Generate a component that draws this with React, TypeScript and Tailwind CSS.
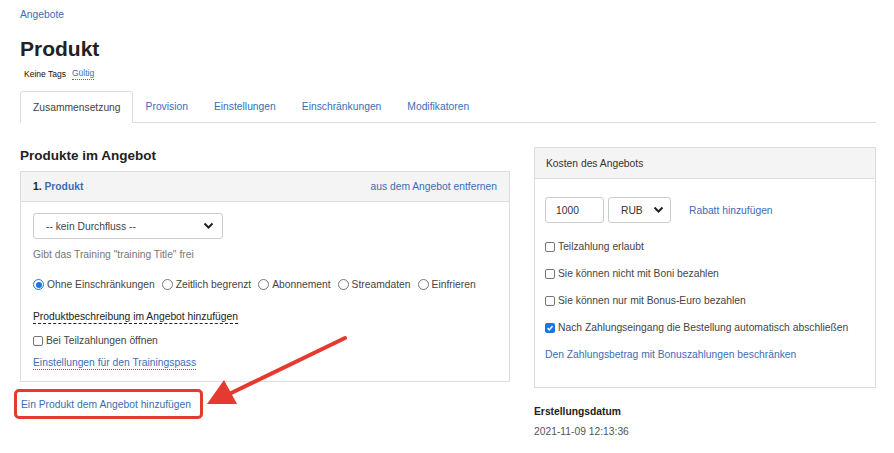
import React from "react";

const link = "text-[#3d6db5]";

function Radio({ checked, label }: { checked?: boolean; label: string }) {
  return (
    <label className="flex items-center gap-[3px] whitespace-nowrap">
      <span
        className={
          "flex h-[11px] w-[11px] shrink-0 items-center justify-center rounded-full border " +
          (checked ? "border-[#1a73e8]" : "border-[#767676]")
        }
      >
        {checked && <span className="h-[6px] w-[6px] rounded-full bg-[#1a73e8]" />}
      </span>
      <span>{label}</span>
    </label>
  );
}

function Check({ checked, label }: { checked?: boolean; label: string }) {
  return (
    <label className="flex items-center gap-[3px] whitespace-nowrap">
      {checked ? (
        <span className="flex h-[10px] w-[10px] shrink-0 items-center justify-center rounded-[2px] bg-[#1a73e8]">
          <svg width="8" height="8" viewBox="0 0 10 10">
            <path d="M2 5.2 L4.2 7.4 L8.2 2.6" stroke="white" strokeWidth="1.9" fill="none" />
          </svg>
        </span>
      ) : (
        <span className="h-[10px] w-[10px] shrink-0 rounded-[2px] border border-[#767676] bg-white" />
      )}
      <span>{label}</span>
    </label>
  );
}

function Chevron() {
  return (
    <svg width="11" height="8" viewBox="0 0 11 8">
      <path d="M1.5 1.5 L5.5 5.5 L9.5 1.5" stroke="#222" strokeWidth="2" fill="none" />
    </svg>
  );
}

export default function App() {
  return (
    <div
      className="relative h-[453px] w-[894px] overflow-hidden whitespace-nowrap bg-white text-[10.3px] leading-[13px] text-[#333]"
      style={{ fontFamily: '"Liberation Sans", Arial, sans-serif' }}
    >
      <div className="pl-[20px] pr-[18px]">
        <div className={"h-[24px] pt-[8px] " + link}>Angebote</div>
        <h1 className="mt-[12px] text-[21px] font-bold leading-[26px] text-[#222]">Produkt</h1>
        <div className="mt-[5px] flex items-center gap-[6px] pl-[4px] text-[8.5px] leading-[12px]">
          <span className="text-[#111]">Keine Tags</span>
          <span className={"border-b border-dotted border-[#3d6db5] " + link}>Gültig</span>
        </div>

        {/* Tabs */}
        <div className="mt-[11px] flex h-[32px] border-b border-[#dddddd]">
          <div className="-mb-px flex items-center rounded-t-[3px] border border-[#dddddd] border-b-white bg-white pl-[12px] pr-[11px] text-[#444]">
            Zusammensetzung
          </div>
          <div className={"flex items-center pl-[13px] pr-[13px] " + link}>Provision</div>
          <div className={"flex items-center px-[13px] " + link}>Einstellungen</div>
          <div className={"flex items-center px-[13px] " + link}>Einschränkungen</div>
          <div className={"flex items-center px-[13px] " + link}>Modifikatoren</div>
        </div>

        <div className="mt-[24px] flex gap-[24px]">
          {/* Left column */}
          <div className="w-[490px]">
            <h2 className="mt-[1px] text-[13.5px] font-bold leading-[16px] text-[#222]">Produkte im Angebot</h2>
            <div className="mt-[7px] border border-[#dddddd]">
              <div className="flex h-[30px] items-center justify-between border-b border-[#dddddd] bg-[#f4f4f4] px-[12px]">
                <span className="font-bold">
                  <span className="text-[#222]">1. </span>
                  <span className={link}>Produkt</span>
                </span>
                <span className={link}>aus dem Angebot entfernen</span>
              </div>
              <div className="px-[12px] pb-[12px] pt-[11px]">
                <div className="flex h-[26px] w-[190px] items-center justify-between rounded-[3px] border border-[#cccccc] pl-[12px] pr-[8px] text-[#444]">
                  <span>-- kein Durchfluss --</span>
                  <Chevron />
                </div>
                <div className="mt-[9px] text-[#777]">Gibt das Training "training Title" frei</div>
                <div className="mt-[17px] flex items-center gap-[7px] text-[#444]">
                  <Radio checked label="Ohne Einschränkungen" />
                  <Radio label="Zeitlich begrenzt" />
                  <Radio label="Abonnement" />
                  <Radio label="Streamdaten" />
                  <Radio label="Einfrieren" />
                </div>
                <div className="mt-[19px]">
                  <span className="border-b border-dashed border-[#222] pb-[1px] text-[#222]">
                    Produktbeschreibung im Angebot hinzufügen
                  </span>
                </div>
                <div className="mt-[11px] text-[#444]">
                  <Check label="Bei Teilzahlungen öffnen" />
                </div>
                <div className="mt-[9px]">
                  <span className={"border-b border-dotted border-[#1a73e8] pb-[1px] " + link}>
                    Einstellungen für den Trainingspass
                  </span>
                </div>
              </div>
            </div>
            <div className="-ml-[6px] mt-[7px] flex h-[30px] w-[189px] items-center rounded-[5px] border-[3px] border-[#e53a2f] pl-[4px]">
              <span className={link}>Ein Produkt dem Angebot hinzufügen</span>
            </div>
          </div>

          {/* Right column */}
          <div className="w-[342px]">
            <div className="border border-[#dddddd]">
              <div className="flex h-[31px] items-center border-b border-[#dddddd] bg-[#f4f4f4] px-[11px] text-[#333]">
                Kosten des Angebots
              </div>
              <div className="px-[10px] pb-[26px] pt-[18px]">
                <div className="flex items-center">
                  <div className="flex h-[26px] w-[59px] items-center rounded-[3px] border border-[#cccccc] pl-[10px] text-[#333]">
                    1000
                  </div>
                  <div className="ml-[4px] flex h-[26px] w-[63px] items-center justify-between rounded-[3px] border border-[#cccccc] pl-[12px] pr-[6px] text-[#333]">
                    <span>RUB</span>
                    <Chevron />
                  </div>
                  <span className={"ml-[18px] " + link}>Rabatt hinzufügen</span>
                </div>
                <div className="mt-[17px] flex flex-col gap-[14px] text-[#444]">
                  <Check label="Teilzahlung erlaubt" />
                  <Check label="Sie können nicht mit Boni bezahlen" />
                  <Check label="Sie können nur mit Bonus-Euro bezahlen" />
                  <Check checked label="Nach Zahlungseingang die Bestellung automatisch abschließen" />
                </div>
                <div className={"mt-[14px] " + link}>Den Zahlungsbetrag mit Bonuszahlungen beschränken</div>
              </div>
            </div>
            <div className="mt-[17px] font-bold text-[#222]">Erstellungsdatum</div>
            <div className="mt-[7px] text-[#555]">2021-11-09 12:13:36</div>
          </div>
        </div>
      </div>

      {/* Annotation arrow */}
      <svg className="pointer-events-none absolute left-0 top-0" width="894" height="453">
        <line x1="345" y1="338" x2="225" y2="396" stroke="#e53a2f" strokeWidth="4" strokeLinecap="round" />
        <polygon points="207,404 224,380 237,404" fill="#e53a2f" />
      </svg>
    </div>
  );
}
